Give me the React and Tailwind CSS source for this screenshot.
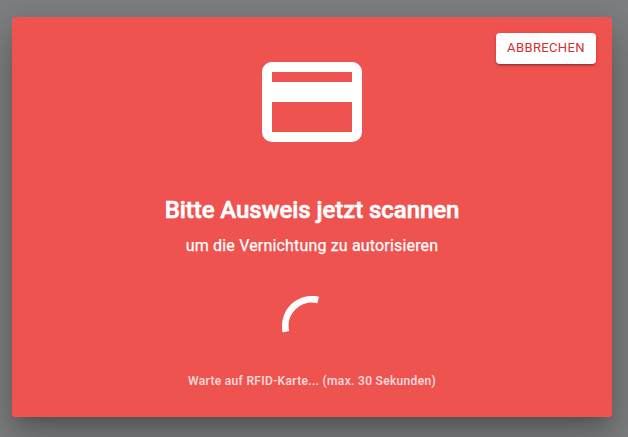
function CardIcon() {
  return (
    <svg className="block size-[120px]" viewBox="0 0 24 24" fill="white">
      <path d="M20 8H4V6h16m0 12H4v-6h16m0-8H4c-1.11 0-2 .89-2 2v12a2 2 0 0 0 2 2h16a2 2 0 0 0 2-2V6c0-1.11-.9-2-2-2z" />
    </svg>
  );
}

function Spinner() {
  return (
    <svg className="block size-[60px]" viewBox="0 0 60 60" fill="none">
      <path d="M3.9 35.7A26.7 26.7 0 0 1 36.2 4" stroke="white" strokeWidth="6.7" />
    </svg>
  );
}

export default function App() {
  return (
    <div className="h-[437px] w-[628px] overflow-hidden bg-[#7e7f81] pt-[17px] pl-3 font-['Roboto',sans-serif]">
      <div className="flex h-[400px] w-[600px] flex-col items-center rounded-[3px] bg-[#ef5350] pt-[25px] text-white shadow-[0_11px_15px_-7px_rgba(0,0,0,0.2),0_24px_38px_3px_rgba(0,0,0,0.14),0_9px_46px_8px_rgba(0,0,0,0.12)]">
        <div className="grid w-full grid-cols-[1fr_120px_1fr] items-start">
          <button className="col-start-3 row-start-1 mt-[-9px] mr-4 h-[31px] w-[100px] justify-self-end rounded-[4px] bg-white pb-px text-[13px] leading-[30px] tracking-[0.37px] text-[#d32f2f] shadow-[0_3px_1px_-2px_rgba(0,0,0,0.2),0_2px_2px_0_rgba(0,0,0,0.14),0_1px_5px_0_rgba(0,0,0,0.12)]">
            ABBRECHEN
          </button>
          <div className="col-start-2 row-start-1">
            <CardIcon />
          </div>
        </div>
        <h1 className="mt-[32px] text-[24px] leading-8 font-medium tracking-[-0.06px] whitespace-nowrap [-webkit-text-stroke:0.6px_white]">Bitte Ausweis jetzt scannen</h1>
        <p className="mt-[8px] text-[16px] leading-6 tracking-[0.17px] whitespace-nowrap [-webkit-text-stroke:0.25px_white]">um die Vernichtung zu autorisieren</p>
        <div className="mt-[38px]">
          <Spinner />
        </div>
        <p className="mt-[15px] text-[12px] leading-5 font-medium tracking-[0.33px] whitespace-nowrap text-white/80">
          Warte auf RFID-Karte... (max. 30 Sekunden)
        </p>
      </div>
    </div>
  );
}
